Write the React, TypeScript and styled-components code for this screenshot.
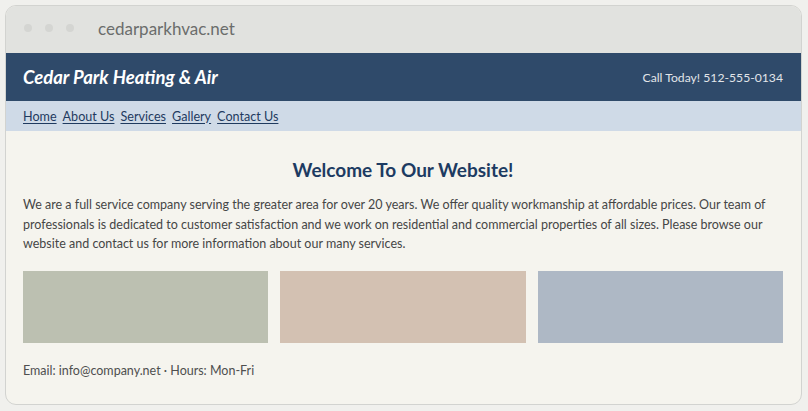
import React from "react";
import styled, { createGlobalStyle } from "styled-components";

const GlobalStyle = createGlobalStyle`
    html, body {
        margin: 0;
        padding: 0;
        background: #f0f0ed;
    }
    body {
        font-family: Lato, "Noto Sans", sans-serif;
    }
`;

const Window = styled.div`
    margin: 5px 6px 0 5px;
    border: 1px solid #d2d3d0;
    border-radius: 11px;
    overflow: hidden;
    background: #f5f4ee;
`;

const TitleBar = styled.div`
    height: 47px;
    display: flex;
    align-items: center;
    padding: 0 0 3px 18px;
    box-sizing: border-box;
    background: #e1e2df;
`;

const Dot = styled.span`
    width: 8px;
    height: 8px;
    border-radius: 50%;
    background: #d4d5d2;
    margin-right: 13px;
`;

const Url = styled.span`
    margin-left: 11px;
    font-size: 17px;
    color: #6b6d6c;
`;

const Header = styled.header`
    height: 48px;
    display: flex;
    align-items: center;
    justify-content: space-between;
    padding: 0 18px 0 17px;
    background: #2f4a6a;
`;

const Brand = styled.h1`
    margin: 0;
    font-size: 18.5px;
    font-weight: 700;
    font-style: italic;
    color: #ffffff;
`;

const Phone = styled.span`
    font-size: 12.2px;
    color: #e2e5e9;
`;

const Nav = styled.nav`
    height: 30px;
    display: flex;
    align-items: center;
    gap: 6px;
    padding: 0 17px;
    background: #cfdae7;
`;

const NavLink = styled.a`
    font-size: 12.6px;
    color: #1f3a5f;
    text-decoration: underline;
    text-underline-offset: 2px;
    cursor: pointer;
`;

const Main = styled.main`
    padding: 27px 18px 24px 17px;
`;

const Title = styled.h2`
    margin: 0 0 13px;
    text-align: center;
    font-size: 19px;
    line-height: 24px;
    font-weight: 700;
    color: #1d3b62;
`;

const Text = styled.p`
    margin: 0;
    font-size: 12.5px;
    line-height: 19.5px;
    color: #454646;
`;

const Gallery = styled.div`
    display: grid;
    grid-template-columns: repeat(3, 1fr);
    gap: 12px;
    margin-top: 17px;
`;

const Tile = styled.div<{ $tone: string }>`
    height: 72px;
    background: ${(p) => p.$tone};
`;

const Footer = styled.footer`
    margin-top: 18px;
    font-size: 12.5px;
    line-height: 19px;
    color: #4e4f4f;
`;

const links = ["Home", "About Us", "Services", "Gallery", "Contact Us"];
const tiles = ["#bcc0b1", "#d3c1b2", "#aeb8c5"];

export default function App() {
    return (
        <>
            <GlobalStyle />
            <Window>
                <TitleBar>
                    <Dot />
                    <Dot />
                    <Dot />
                    <Url>cedarparkhvac.net</Url>
                </TitleBar>
                <Header>
                    <Brand>Cedar Park Heating &amp; Air</Brand>
                    <Phone>Call Today! 512-555-0134</Phone>
                </Header>
                <Nav>
                    {links.map((l) => (
                        <NavLink key={l}>{l}</NavLink>
                    ))}
                </Nav>
                <Main>
                    <Title>Welcome To Our Website!</Title>
                    <Text>
                        We are a full service company serving the greater area for over 20 years. We offer
                        quality workmanship at affordable prices. Our team of professionals is dedicated to
                        customer satisfaction and we work on residential and commercial properties of all
                        sizes. Please browse our website and contact us for more information about our many
                        services.
                    </Text>
                    <Gallery>
                        {tiles.map((t) => (
                            <Tile key={t} $tone={t} />
                        ))}
                    </Gallery>
                    <Footer>Email: info@company.net · Hours: Mon-Fri</Footer>
                </Main>
            </Window>
        </>
    );
}
